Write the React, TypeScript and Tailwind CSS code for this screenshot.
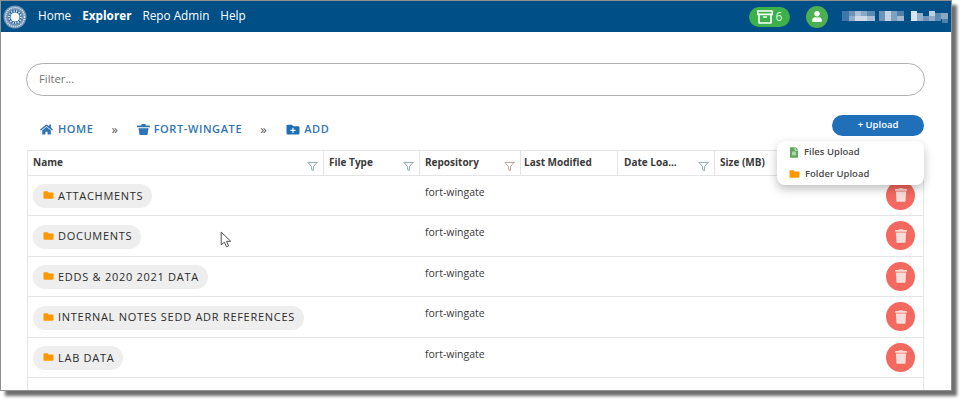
import React from "react";
import { FaHome, FaFolder, FaFolderPlus, FaTrash, FaUser, FaFileAlt } from "react-icons/fa";
import { FiFilter, FiArchive } from "react-icons/fi";

const rows = ["ATTACHMENTS", "DOCUMENTS", "EDDS & 2020 2021 DATA", "INTERNAL NOTES SEDD ADR REFERENCES", "LAB DATA"];
const rowH = ["h-[40px]", "h-[41px]", "h-[40px]", "h-[41px]", "h-[40px]"];

function Bucket({ className }: { className?: string }) {
  return (
    <svg viewBox="0 0 14 12" className={className} fill="currentColor">
      <path d="M5 0h4l.5 1.500H13.500a.5.5 0 0 1 .5.5v1.500H0V2a.5.5 0 0 1 .5-.5H4.500z" />
      <path d="M1.500 4.500h11L11.500 11a1 1 0 0 1-1 1h-7a1 1 0 0 1-1-1z" />
    </svg>
  );
}

function Logo() {
  return (
    <svg viewBox="0 0 24 24" className="w-[24px] h-[24px]">
      <circle cx="12" cy="12" r="11.500" fill="#6f93b6" />
      <circle cx="12" cy="12" r="9.500" fill="none" stroke="#dfe8f0" strokeWidth="1.400" strokeDasharray="1.200 0.800" />
      <circle cx="12" cy="12" r="7" fill="#1e5c92" />
      <circle cx="12" cy="12" r="4.500" fill="#ffffff" />
      <circle cx="12" cy="12" r="6" fill="none" stroke="#ffffff" strokeWidth="1.600" strokeDasharray="1.300 1.300" />
    </svg>
  );
}

function Redacted() {
  const cells: [string, number, number, number, number][] = [
    ["#3f78a8", 0, 1, 7, 5], ["#6c94b9", 7, 1, 6, 5], ["#a9c0d6", 13, 1, 6, 5], ["#8aa9c6", 19, 1, 6, 5], ["#5d8ab0", 25, 1, 8, 5],
    ["#3f78a8", 0, 6, 7, 5], ["#8fadc9", 7, 6, 6, 5], ["#cfdce8", 13, 6, 12, 5], ["#a9c0d6", 25, 6, 8, 5],
    ["#6c94b9", 37, 1, 6, 10], ["#c4d4e3", 43, 1, 6, 10], ["#7ea0c0", 49, 1, 6, 10], ["#a2bad1", 55, 6, 7, 5], ["#4f82ac", 55, 1, 7, 5],
    ["#dbe5ee", 69, 1, 6, 10], ["#94b0ca", 75, 3, 6, 8], ["#6c94b9", 81, 6, 6, 5], ["#bcd0e0", 87, 1, 6, 5], ["#8fadc9", 87, 6, 6, 5],
    ["#5d8ab0", 93, 3, 6, 8], ["#8aa9c6", 99, 3, 7, 6], ["#4f82ac", 100, 9, 6, 4],
  ];
  return (
    <svg viewBox="0 0 106 13" className="w-[106px] h-[13px]" shapeRendering="crispEdges">
      {cells.map(([c, x, y, w, h], i) => (
        <rect key={i} x={x} y={y} width={w} height={h} fill={c} />
      ))}
    </svg>
  );
}

function HeadCell({ label, filter, tint, border = true, pad = "pl-[5px]" }: { label: string; filter?: boolean; tint?: string; border?: boolean; pad?: string }) {
  return (
    <div className={`relative flex items-center ${pad} ${border ? "border-r border-[#e4e4e8]" : ""}`}>
      <span className="text-[10px] font-bold text-[#3a3a3a] whitespace-nowrap -mt-[2px]">{label}</span>
      {filter && <FiFilter className={`absolute right-[5px] bottom-[3px] w-[11px] h-[11px] ${tint ?? "text-[#8aa4a8]"}`} />}
    </div>
  );
}

export default function App() {
  return (
    <div className="w-[967px] h-[406px] bg-white overflow-hidden" style={{ fontFamily: '"Open Sans", "Noto Sans", sans-serif' }}>
      <div className="relative w-[952px] h-[391px] bg-white border border-[#8f8f8f] shadow-[5px_5px_3px_#6f6f6f] overflow-hidden flex flex-col">
        <header className="h-[31px] shrink-0 bg-[#004f87] flex items-center pl-[2px] text-white">
          <Logo />
          <nav className="flex items-center ml-[11px] gap-[11px] text-[11.750px] -mt-[1px]">
            <span>Home</span>
            <span className="font-bold">Explorer</span>
            <span>Repo Admin</span>
            <span>Help</span>
          </nav>
          <div className="ml-auto flex items-center pr-[3px]">
            <div className="flex items-center justify-center gap-[3px] w-[41px] h-[20px] rounded-full bg-[#3cb04a]">
              <FiArchive className="w-[16px] h-[16px] stroke-[2.500]" />
              <span className="text-[12px] text-[#d8f5e0]">6</span>
            </div>
            <div className="ml-[16px] w-[22px] h-[22px] rounded-full bg-[#4caf50] flex items-center justify-center">
              <FaUser className="w-[10px] h-[11px]" />
            </div>
            <div className="ml-[14px] flex items-center"><Redacted /></div>
          </div>
        </header>

        <div className="pl-[25px] pr-[26px] pt-[31px]">
          <div className="h-[33px] rounded-full border border-[#b0b0b0] flex items-center pl-[12px] text-[11.250px] text-[#757575]">Filter...</div>
        </div>

        <div className="flex items-start justify-between pl-[26px] pr-[27px] mt-[19px] h-[35px]">
          <div className="flex items-center h-[28px] text-[#2f75b5] text-[11px] font-semibold tracking-[0.6px]">
            <span className="flex items-center gap-[5px] ml-[13px]"><FaHome className="w-[13px] h-[13px]" />HOME</span>
            <span className="ml-[18px] text-[#555] text-[13px] font-normal leading-none">»</span>
            <span className="flex items-center gap-[4px] ml-[18px]"><Bucket className="w-[13px] h-[11px]" />FORT-WINGATE</span>
            <span className="ml-[18px] text-[#555] text-[13px] font-normal leading-none">»</span>
            <span className="flex items-center gap-[4px] ml-[19px]"><FaFolderPlus className="w-[14px] h-[13px] text-[#1f6fb5]" />ADD</span>
          </div>
          <div className="w-[92px] h-[21px] rounded-full bg-[#1f70b8] text-white text-[9.500px] font-semibold flex items-center justify-center">+ Upload</div>
        </div>

        <div className="ml-[26px] mr-[27px] flex-1 border-x border-t border-[#e4e4e8]">
          <div className="grid grid-cols-[296px_96px_101px_97px_97px_1fr] h-[25px] border-b border-[#e4e4e8]">
            <HeadCell label="Name" filter />
            <HeadCell label="File Type" filter />
            <HeadCell label="Repository" filter tint="text-[#b89a90]" />
            <HeadCell label="Last Modified" pad="pl-[3px]" />
            <HeadCell label="Date Loa..." filter pad="pl-[6px]" />
            <HeadCell label="Size (MB)" border={false} />
          </div>
          {rows.map((r, i) => (
            <div key={r} className={`grid grid-cols-[392px_1fr_auto] items-center border-b border-[#e4e4e8] ${rowH[i]}`}>
              <div className="pl-[5px] -mt-[1px]">
                <div className="inline-flex items-center gap-[4px] h-[24px] pl-[10px] pr-[9px] rounded-full bg-[#eeeeee] text-[11px] font-medium tracking-[0.72px] text-[#2b2b2b] whitespace-nowrap">
                  <FaFolder className="w-[11px] h-[10px] text-[#ff9800] -mt-[2px]" />
                  {r}
                </div>
              </div>
              <div className="pl-[5px] text-[10.500px] text-[#3a3a3a] -mt-[6px]">fort-wingate</div>
              <div className="pr-[8px] -mt-[1px]">
                <div className="w-[29px] h-[29px] rounded-full bg-[#f4695f] flex items-center justify-center">
                  <FaTrash className="w-[12px] h-[14px] text-[#fbdcd8]" />
                </div>
              </div>
            </div>
          ))}
        </div>

        <div className="absolute left-[776px] top-[140px] w-[147px] h-[44px] bg-white rounded-[8px] shadow-[0_4px_10px_rgba(0,0,0,0.25)] flex flex-col justify-center text-[9.500px] font-semibold text-[#4a4a4a]">
          <div className="flex items-center h-[22px] pl-[13px] gap-[6px]"><FaFileAlt className="w-[8px] h-[11px] text-[#5da85a]" />Files Upload</div>
          <div className="flex items-center h-[22px] pl-[12px] gap-[5px]"><FaFolder className="w-[11px] h-[10px] text-[#ff9800]" />Folder Upload</div>
        </div>

        <svg viewBox="0 0 12 16" className="absolute left-[219px] top-[230px] w-[13px] h-[17px]">
          <path d="M1 1v12l3-2.500 2 4.500 2-1-2-4.300h4z" fill="#fff" stroke="#333" strokeWidth="0.800" />
        </svg>
      </div>
    </div>
  );
}
